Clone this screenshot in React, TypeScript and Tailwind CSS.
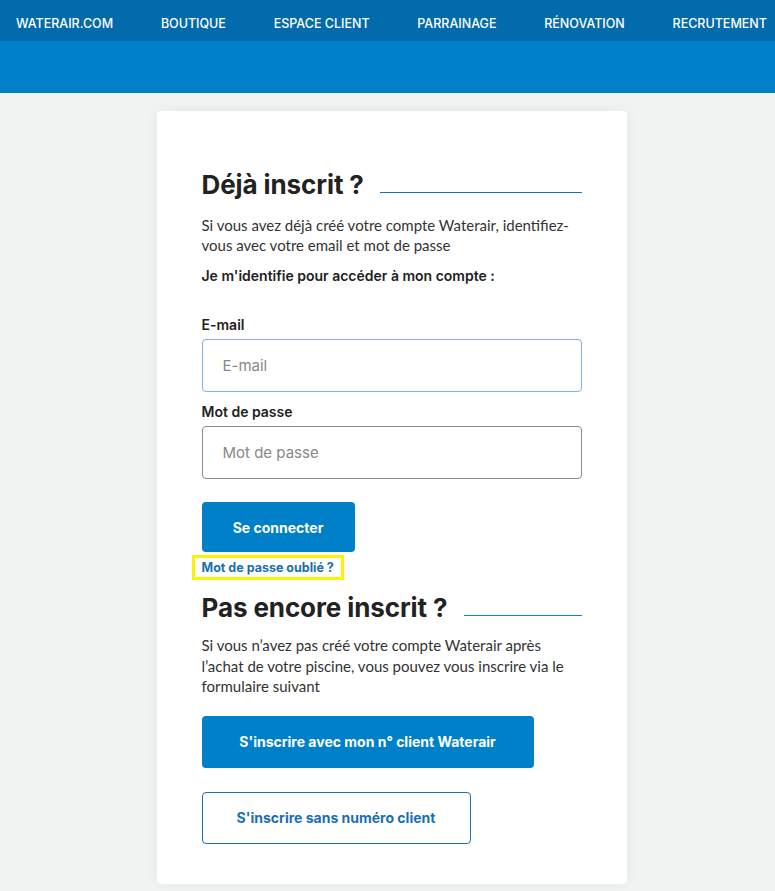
const navItems = ['WATERAIR.COM', 'BOUTIQUE', 'ESPACE CLIENT', 'PARRAINAGE', 'RÉNOVATION', 'RECRUTEMENT'];

const heading = "font-['Inter',sans-serif]";
const body = "font-['Lato',sans-serif]";

function SectionTitle({ children, lineClass }: { children: string; lineClass: string }) {
  return (
    <div className="flex items-end gap-4">
      <h2 className={`${heading} text-[26px] font-bold leading-[32px] text-[#222] tracking-[-0.1px] whitespace-nowrap`}>
        {children}
      </h2>
      <div className={`flex-1 h-px mb-[8px] ${lineClass}`} />
    </div>
  );
}

export default function App() {
  return (
    <div className="min-h-[891px] bg-[#f1f2f2]">
      <nav className="h-[41px] bg-[#036bab] flex items-center justify-between pl-4 pr-2 pt-[7px]">
        {navItems.map((item) => (
          <a key={item} className={`${heading} text-white text-[12.5px] font-medium`}>
            {item}
          </a>
        ))}
      </nav>
      <div className="h-[52px] bg-[#0080c9]" />

      <main className="pt-[18px] pb-2 pl-2 flex justify-center">
        <div className="w-[470px] bg-white rounded-[4px] shadow-[0_0_12px_rgba(0,0,0,0.06)] px-[45px] pt-[58px] pb-[40px]">
          <SectionTitle lineClass="bg-[#1a6fb0]">Déjà inscrit ?</SectionTitle>

          <p className={`${body} mt-[14px] text-[15px] leading-[20px] text-[#333]`}>
            Si vous avez déjà créé votre compte Waterair, identifiez-vous avec votre email et mot de passe
          </p>
          <p className={`${heading} mt-[10px] text-[14px] font-semibold text-[#222]`}>
            Je m'identifie pour accéder à mon compte :
          </p>

          <form className="mt-[30px]">
            <label className={`${heading} block text-[14px] font-semibold text-[#222] leading-[18px]`}>E-mail</label>
            <input
              placeholder="E-mail"
              className={`${heading} mt-[5px] block w-full h-[53px] rounded-[4px] border border-[#86aee4] px-5 text-[15px] text-[#333] placeholder:text-[#888] outline-none`}
            />
            <label className={`${heading} block mt-[11px] text-[14px] font-semibold text-[#222] leading-[18px]`}>
              Mot de passe
            </label>
            <input
              type="password"
              placeholder="Mot de passe"
              className={`${heading} mt-[5px] block w-full h-[53px] rounded-[4px] border border-[#8a8a8a] px-5 text-[15px] text-[#333] placeholder:text-[#888] outline-none`}
            />
            <button
              type="button"
              className={`${heading} mt-[23px] w-[153px] h-[50px] rounded-[4px] bg-[#0080c8] text-white text-[14px] font-bold`}
            >
              Se connecter
            </button>
          </form>

          <a
            className={`${heading} mt-[3px] -ml-[10px] inline-block border-[3px] border-[#fff200] px-[7px] py-[1px] text-[12.5px] font-bold text-[#1a6fb0] leading-[17px]`}
          >
            Mot de passe oublié ?
          </a>

          <div className="mt-[12px]">
            <SectionTitle lineClass="bg-[#0a84cc]">Pas encore inscrit ?</SectionTitle>
          </div>

          <p className={`${body} mt-[11px] text-[15px] leading-[20.5px] text-[#333]`}>
            Si vous n’avez pas créé votre compte Waterair après l’achat de votre piscine, vous pouvez vous inscrire via le formulaire suivant
          </p>

          <div className="mt-[19px] flex flex-col items-start gap-6">
            <button
              type="button"
              className={`${heading} w-[332px] h-[52px] rounded-[4px] bg-[#0080c8] text-white text-[14px] font-bold`}
            >
              S'inscrire avec mon n° client Waterair
            </button>
            <button
              type="button"
              className={`${heading} w-[269px] h-[52px] rounded-[4px] border border-[#1a6fb0] bg-white text-[#1a6fb0] text-[14px] font-bold`}
            >
              S'inscrire sans numéro client
            </button>
          </div>
        </div>
      </main>
    </div>
  );
}
